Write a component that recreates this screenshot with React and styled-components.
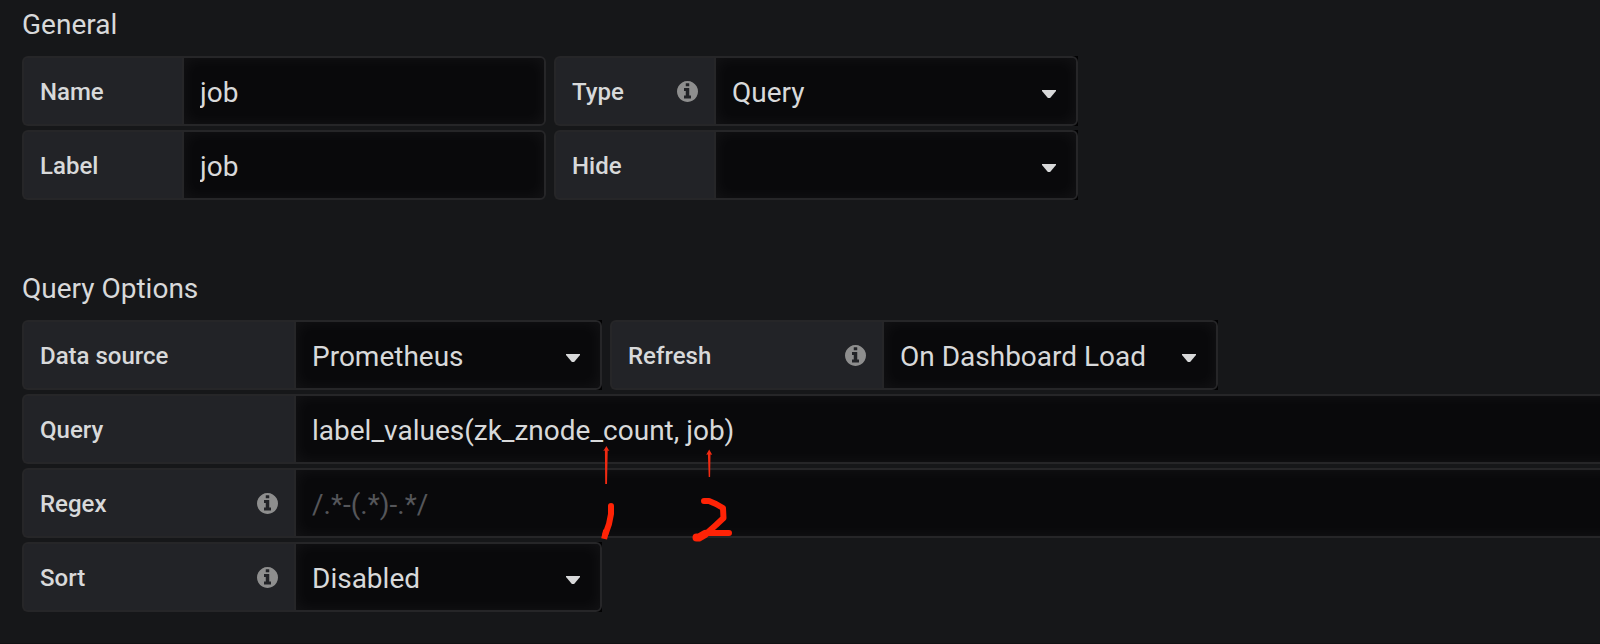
import React from "react";
import styled, { createGlobalStyle, css } from "styled-components";

const GlobalStyle = createGlobalStyle`
  *, *::before, *::after { box-sizing: border-box; }
  body {
    margin: 0;
    background: #161719;
    color: #d8d9da;
    font-family: Roboto, "Liberation Sans", sans-serif;
    overflow: hidden;
  }
`;

const Page = styled.main`
  position: relative;
  height: 644px;
  padding-left: 22px;
  overflow: hidden;
  border-bottom: 1px solid #111113;
`;

const Section = styled.section`
  display: flex;
  flex-direction: column;
  height: ${(p) => p.$height}px;
`;

const Heading = styled.h5`
  margin: 0;
  padding-top: 9px;
  height: 56px;
  font-size: 28px;
  line-height: 32px;
  font-weight: 400;
  flex: none;
`;

const Rows = styled.div`
  display: flex;
  flex-direction: column;
  gap: 4px;
`;

const Row = styled.div`
  display: flex;
  gap: 8px;
  height: 70px;
`;

const Field = styled.div`
  display: flex;
  flex: ${(p) => (p.$grow ? "1" : "none")};
  ${(p) => p.$grow && css`margin-right: -40px;`}
`;

const Label = styled.label`
  display: flex;
  align-items: center;
  justify-content: space-between;
  width: ${(p) => p.$width}px;
  flex: none;
  padding: 0 16px;
  border: 2px solid #262628;
  border-right: 0;
  border-radius: 6px 0 0 6px;
  background: #222327;
  font-size: 24px;
  font-weight: 500;
`;

const Text = styled.span`
  padding-top: 2px;
`;

const control = css`
  display: flex;
  align-items: center;
  height: 70px;
  border: 2px solid #262628;
  border-radius: 0 6px 6px 0;
  background: #09090b;
  box-shadow: inset 0 0 16px rgba(255, 255, 255, 0.05);
  color: #d8d9da;
  font: 400 28px/36px Roboto, "Liberation Sans", sans-serif;
`;

const Input = styled.input`
  ${control}
  width: ${(p) => (p.$width ? `${p.$width}px` : "100%")};
  padding: 2px 16px 0;
  outline: none;
  &::placeholder { color: #55565a; opacity: 1; }
`;

const SelectBack = styled.div`
  width: ${(p) => p.$width}px;
  background: #020203;
`;

const SelectBox = styled.div`
  ${control}
  justify-content: space-between;
  padding: 2px 20px 0 16px;
`;

const Caret = styled.span`
  width: 14px;
  height: 8px;
  margin-top: 4px;
  background: #d8d9da;
  clip-path: polygon(0 0, 100% 0, 100% 12%, 58% 100%, 42% 100%, 0 12%);
`;

const InfoSvg = styled.svg`
  width: 21px;
  height: 21px;
  fill: #8e8e8e;
`;

const Marks = styled.svg`
  position: absolute;
  left: 590px;
  top: 440px;
  width: 150px;
  height: 110px;
  fill: none;
  stroke: #ff2306;
  stroke-linecap: round;
  stroke-linejoin: round;
`;

const Info = () => (
  <InfoSvg viewBox="0 0 1536 1536" aria-hidden="true">
    <path d="M1024 1248v-160q0-14-9-23t-23-9h-96v-512q0-14-9-23t-23-9h-320q-14 0-23 9t-9 23v160q0 14 9 23t23 9h96v320h-96q-14 0-23 9t-9 23v160q0 14 9 23t23 9h448q14 0 23-9t9-23zM896 352v-160q0-14-9-23t-23-9h-192q-14 0-23 9t-9 23v160q0 14 9 23t23 9h192q14 0 23-9t9-23zM1536 768q0 209-103 385.500t-279.500 279.500t-385.500 103t-385.500-103t-279.500-279.500t-103-385.500t103-385.500t279.500-279.500t385.500-103t385.500 103t279.500 279.500t103 385.500z" />
  </InfoSvg>
);

const FieldLabel = ({ width, info, children }) => (
  <Label $width={width}>
    <Text>{children}</Text>
    {info && <Info />}
  </Label>
);

const Select = ({ width, value }) => (
  <SelectBack $width={width}>
    <SelectBox>
      <Text>{value}</Text>
      <Caret />
    </SelectBox>
  </SelectBack>
);

export default function App() {
  return (
    <>
      <GlobalStyle />
      <Page>
        <Section $height={264}>
          <Heading>General</Heading>
          <Rows>
            <Row>
              <Field>
                <FieldLabel width={160}>Name</FieldLabel>
                <Input $width={364} defaultValue="job" />
              </Field>
              <Field>
                <FieldLabel width={160} info>Type</FieldLabel>
                <Select width={364} value="Query" />
              </Field>
            </Row>
            <Row>
              <Field>
                <FieldLabel width={160}>Label</FieldLabel>
                <Input $width={364} defaultValue="job" />
              </Field>
              <Field>
                <FieldLabel width={160}>Hide</FieldLabel>
                <Select width={364} value="" />
              </Field>
            </Row>
          </Rows>
        </Section>
        <Section $height={348}>
          <Heading>Query Options</Heading>
          <Rows>
            <Row>
              <Field>
                <FieldLabel width={272}>Data source</FieldLabel>
                <Select width={308} value="Prometheus" />
              </Field>
              <Field>
                <FieldLabel width={272} info>Refresh</FieldLabel>
                <Select width={336} value="On Dashboard Load" />
              </Field>
            </Row>
            <Row>
              <Field $grow>
                <FieldLabel width={272}>Query</FieldLabel>
                <Input defaultValue="label_values(zk_znode_count, job)" spellCheck={false} />
              </Field>
            </Row>
            <Row>
              <Field $grow>
                <FieldLabel width={272} info>Regex</FieldLabel>
                <Input placeholder="/.*-(.*)-.*/" />
              </Field>
            </Row>
            <Row>
              <Field>
                <FieldLabel width={272} info>Sort</FieldLabel>
                <Select width={308} value="Disabled" />
              </Field>
            </Row>
          </Rows>
        </Section>
        <Marks viewBox="590 440 150 110" aria-hidden="true">
          <g fill="#f02a12" stroke="none">
            <path d="M606.4 446L609.3 451L607.7 450.6L607 484H605.2L604.900 450.6L603.3 451Z" />
            <path d="M709.2 449.5L712.2 454.8L710.500 454.4L710.1 477H708.7L707.900 454.4L706.2 454.8Z" />
          </g>
          <path strokeWidth="6" d="M611 506V514L609 524L605.500 534" />
          <path strokeWidth="6" strokeLinecap="square" d="M605.500 533L604.800 536" />
          <path strokeWidth="6" d="M704 501H709L716 504L723 508L723.500 518L716 525L707 533H729" />
          <path strokeWidth="8" d="M696.500 537.500H699L705 534" />
        </Marks>
      </Page>
    </>
  );
}
